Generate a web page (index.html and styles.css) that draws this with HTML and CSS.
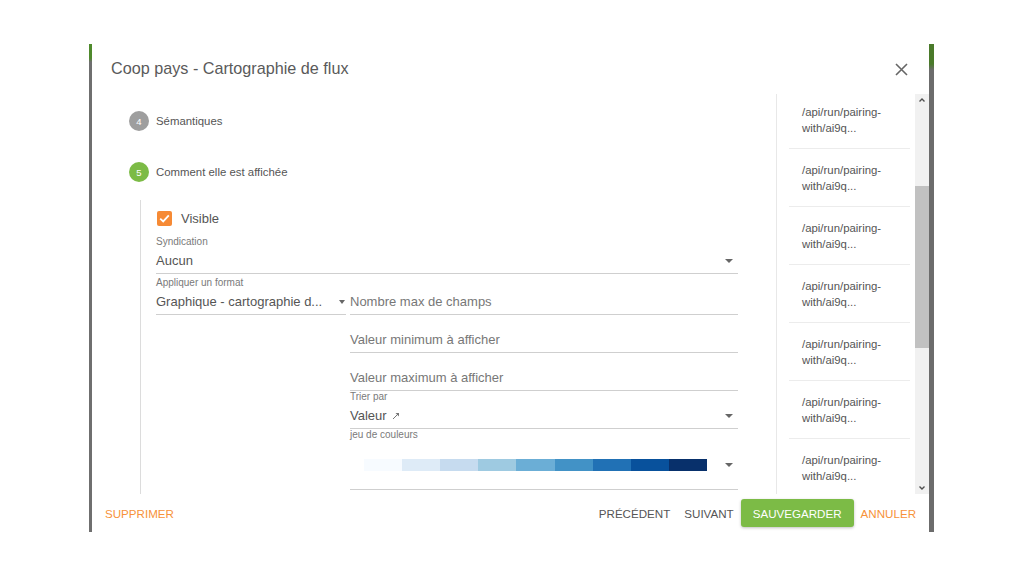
FILE: index.html
```html
<!DOCTYPE html>
<html lang="fr">
<head>
<meta charset="utf-8">
<title>Coop pays - Cartographie de flux</title>
<link rel="stylesheet" href="styles.css">
</head>
<body>
<div class="stage">
  <div class="edge edge-left"></div>
  <div class="dialog">
    <div class="header">
      <h1 class="title">Coop pays - Cartographie de flux</h1>
      <svg class="close" width="13" height="13" viewBox="0 0 13 13"><path d="M1 1 L12 12 M12 1 L1 12" stroke="#666" stroke-width="1.6" fill="none"/></svg>
    </div>
    <div class="body">
      <div class="main">
        <div class="step">
          <span class="step-num grey">4</span><span class="step-label">Sémantiques</span>
        </div>
        <div class="step step-active">
          <span class="step-num green">5</span><span class="step-label">Comment elle est affichée</span>
        </div>
        <div class="step-content">
          <div class="check-row">
            <span class="checkbox"><svg width="11" height="9" viewBox="0 0 11 9"><path d="M1.2 4.6 L4.2 7.4 L9.8 1.4" stroke="#fff" stroke-width="1.8" fill="none"/></svg></span>
            <span class="check-label">Visible</span>
          </div>
          <div class="field select first">
            <div class="label">Syndication</div>
            <div class="value"><span>Aucun</span><span class="caret"></span></div>
          </div>
          <div class="row">
            <div class="field select format">
              <div class="label">Appliquer un format</div>
              <div class="value"><span class="ellipsis">Graphique - cartographie d...</span><span class="caret small"></span></div>
            </div>
            <div class="field input grow">
              <div class="value placeholder">Nombre max de champs</div>
            </div>
          </div>
          <div class="sub">
            <div class="field input">
              <div class="value placeholder">Valeur minimum à afficher</div>
            </div>
            <div class="field input">
              <div class="value placeholder">Valeur maximum à afficher</div>
            </div>
            <div class="field select">
              <div class="label">Trier par</div>
              <div class="value"><span class="sort">Valeur <svg width="8" height="8" viewBox="0 0 8 8"><path d="M1 7 L6.5 1.5" stroke="#777" stroke-width="1" fill="none"/><path d="M3.5 1 L7 1 L7 4.5 Z" fill="#777"/></svg></span><span class="caret"></span></div>
            </div>
            <div class="field select colors">
              <div class="label">jeu de couleurs</div>
              <div class="value tall">
                <div class="scale">
                  <span style="background:#f7fbff"></span>
                  <span style="background:#deebf7"></span>
                  <span style="background:#c6dbef"></span>
                  <span style="background:#9ecae1"></span>
                  <span style="background:#6baed6"></span>
                  <span style="background:#4292c6"></span>
                  <span style="background:#2171b5"></span>
                  <span style="background:#08519c"></span>
                  <span style="background:#08306b"></span>
                </div>
                <span class="caret"></span>
              </div>
            </div>
          </div>
        </div>
      </div>
      <div class="list">
        <div class="item first-item">/api/run/pairing-<br>with/ai9q...</div>
        <div class="item">/api/run/pairing-<br>with/ai9q...</div>
        <div class="item">/api/run/pairing-<br>with/ai9q...</div>
        <div class="item">/api/run/pairing-<br>with/ai9q...</div>
        <div class="item">/api/run/pairing-<br>with/ai9q...</div>
        <div class="item">/api/run/pairing-<br>with/ai9q...</div>
        <div class="item">/api/run/pairing-<br>with/ai9q...</div>
      </div>
      <div class="scrollbar">
        <svg class="arrow" width="14" height="12" viewBox="0 0 14 12"><path d="M4.5 7.5 L7 5 L9.5 7.5" stroke="#505050" stroke-width="1.4" fill="none"/></svg>
        <div class="track"><div class="thumb"></div></div>
        <svg class="arrow" width="14" height="12" viewBox="0 0 14 12"><path d="M4.5 4.5 L7 7 L9.5 4.5" stroke="#505050" stroke-width="1.4" fill="none"/></svg>
      </div>
    </div>
    <div class="footer">
      <button class="btn text orange">Supprimer</button>
      <div class="actions">
        <button class="btn text">Précédent</button>
        <button class="btn text">Suivant</button>
        <button class="btn primary">Sauvegarder</button>
        <button class="btn text orange">Annuler</button>
      </div>
    </div>
  </div>
  <div class="edge edge-right"></div>
</div>
</body>
</html>
```

FILE: styles.css
```css
* { box-sizing: border-box; }
html, body { margin: 0; padding: 0; background: #fff; }
body {
  font-family: "Liberation Sans", Arial, sans-serif;
  color: #555;
  width: 1024px;
  height: 576px;
  overflow: hidden;
}
.stage {
  display: flex;
  margin: 44px 0 0 89px;
  width: 845px;
  height: 488px;
}
.edge { flex: none; }
.edge-left {
  width: 3px;
  background: linear-gradient(to bottom, #4f8a2c 0, #4f8a2c 14px, #6f6f6f 18px, #6f6f6f 100%);
}
.edge-right {
  width: 5px;
  background: linear-gradient(to bottom, #4a7a2a 0, #4a7a2a 20px, #6c6c6c 26px, #6c6c6c 100%);
}
.dialog {
  flex: 1;
  display: flex;
  flex-direction: column;
  background: #fff;
}
.header {
  height: 50px;
  flex: none;
  display: flex;
  align-items: center;
  justify-content: space-between;
  padding: 0 21px 0 19px;
}
.title {
  margin: 0;
  font-weight: normal;
  font-size: 16.2px;
  color: #5a5a5a;
  position: relative;
  top: -1px;
}
.body {
  flex: none;
  height: 400px;
  display: flex;
}
.main {
  width: 685px;
  flex: none;
  overflow: hidden;
  border-right: 1px solid #e8e8e8;
  padding: 17px 0 0 37px;
}
.step {
  display: flex;
  align-items: center;
  gap: 7px;
  height: 20px;
}
.step-active { margin-top: 31px; }
.step-num {
  width: 20px;
  height: 20px;
  border-radius: 50%;
  color: #fff;
  font-size: 9.5px;
  display: flex;
  align-items: center;
  justify-content: center;
}
.step-num.grey { background: #9e9e9e; }
.step-num.green { background: #7cbb46; }
.step-label { font-size: 11.4px; color: #555; }
.step-content {
  margin: 18px 0 0 11px;
  border-left: 1px solid #dcdcdc;
  padding: 11px 0 40px 15px;
  width: 598px;
}
.check-row {
  display: flex;
  align-items: center;
  height: 15px;
  padding-left: 1px;
}
.checkbox {
  width: 15px;
  height: 15px;
  border-radius: 2px;
  background: #f68a35;
  display: flex;
  align-items: center;
  justify-content: center;
}
.check-label {
  margin-left: 9px;
  font-size: 13px;
  color: #555;
}
.field {
  border-bottom: 1px solid #cfcfcf;
}
.field.first { margin-top: 10px; }
.label {
  font-size: 10px;
  line-height: 12px;
  height: 12px;
  color: #7a7a7a;
}
.value {
  height: 25px;
  line-height: 25px;
  font-size: 13px;
  color: #555;
  display: flex;
  align-items: center;
  justify-content: space-between;
  padding-right: 5px;
}
.value.placeholder { color: #777; }
.caret {
  width: 0;
  height: 0;
  border-left: 4px solid transparent;
  border-right: 4px solid transparent;
  border-top: 4px solid #666;
  flex: none;
}
.caret.small {
  border-left-width: 3.5px;
  border-right-width: 3.5px;
}
.row {
  display: flex;
  align-items: flex-end;
  gap: 4px;
  margin-top: 3px;
}
.format { width: 190px; flex: none; }
.format .value { padding-right: 1px; }
.ellipsis {
  white-space: nowrap;
  overflow: hidden;
}
.grow { flex: 1; }
.input { padding-top: 12px; }
.sub {
  margin-left: 194px;
  width: 388px;
}
.sort { display: inline-flex; align-items: center; gap: 5px; }
.value.tall {
  height: 48px;
  padding-left: 14px;
}
.scale {
  display: flex;
  width: 343px;
  height: 12px;
}
.scale span { flex: 1; }
.list {
  width: 138px;
  flex: none;
  overflow: hidden;
  padding-left: 12px;
  padding-right: 5px;
}
.item {
  font-size: 11.4px;
  line-height: 16px;
  color: #555;
  padding: 13px 0 12px 13px;
  border-bottom: 1px solid #ececec;
}
.item.first-item { padding-top: 10px; }
.scrollbar {
  width: 14px;
  flex: none;
  background: #f1f1f1;
  display: flex;
  flex-direction: column;
}
.arrow { flex: none; display: block; }
.track {
  flex: 1;
  padding-top: 80px;
}
.thumb {
  height: 162px;
  background: #c1c1c1;
}
.footer {
  flex: 1;
  display: flex;
  align-items: center;
  justify-content: space-between;
  padding: 0 13px 0 13px;
}
.actions {
  display: flex;
  align-items: center;
  gap: 7px;
}
.btn {
  font-family: "Liberation Sans", Arial, sans-serif;
  font-size: 11.6px;
  text-transform: uppercase;
  background: none;
  border: none;
  padding: 0;
  color: #555;
  cursor: pointer;
}
.btn.text + .btn.text { margin-left: 7px; }
.btn.orange { color: #f7923a; }
.btn.primary {
  background: #7cbb46;
  color: #fff;
  height: 28px;
  padding: 0 12px;
  border-radius: 3px;
  box-shadow: 0 1px 3px rgba(0,0,0,0.25);
}
```
